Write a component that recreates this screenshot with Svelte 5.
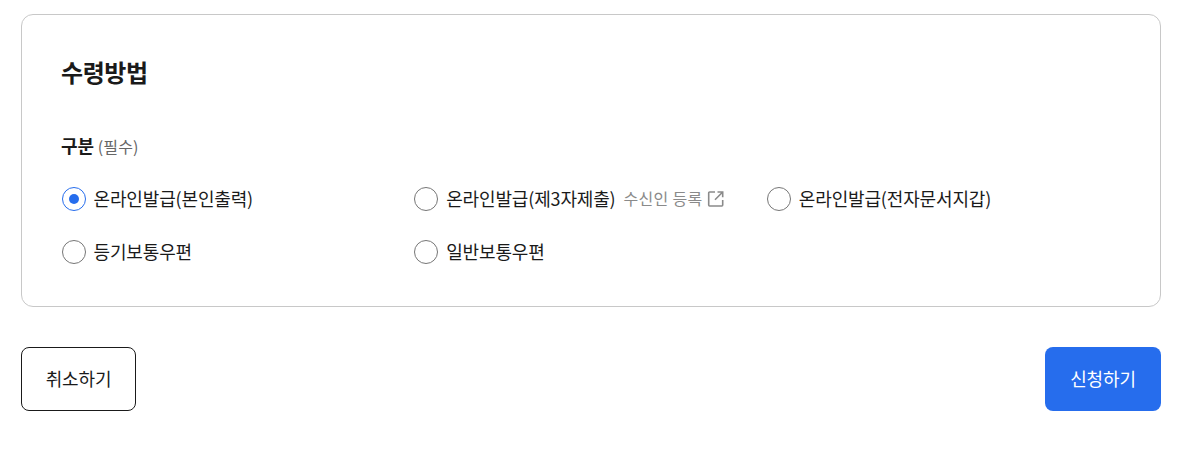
<script>
  const options = [
    { id: 'self', label: '온라인발급(본인출력)', checked: true },
    { id: 'third', label: '온라인발급(제3자제출)', link: '수신인 등록' },
    { id: 'wallet', label: '온라인발급(전자문서지갑)' },
    { id: 'registered', label: '등기보통우편' },
    { id: 'normal', label: '일반보통우편' },
  ]
  let selected = 'self'
</script>

<div class="page">
  <section class="card">
    <h2>수령방법</h2>
    <div class="field-label"><strong>구분</strong> <span>(필수)</span></div>
    <div class="options">
      {#each options as opt}
        <div class="option">
          <label>
            <input type="radio" name="method" value={opt.id} bind:group={selected} />
            <span class="mark"></span>
            <span class="text">{opt.label}</span>
          </label>
          {#if opt.link}
            <span class="link">{opt.link}
              <svg width="18" height="18" viewBox="0 0 18 18" fill="none" stroke="#8a8a8a" stroke-width="1.6">
                <path d="M8 2H2.6a.9.9 0 0 0-.9.9v12.2a.9.9 0 0 0 .9.9h12.2a.9.9 0 0 0 .9-.9V10" />
                <path d="M10.5 2h5.2v5.2M15.7 2 8 9.7" />
              </svg>
            </span>
          {/if}
        </div>
      {/each}
    </div>
  </section>
  <div class="actions">
    <button class="btn cancel">취소하기</button>
    <button class="btn submit">신청하기</button>
  </div>
</div>

<style>
  :global(body) {
    margin: 0;
    background: #fff;
  }

  .page {
    box-sizing: border-box;
    width: 1204px;
    height: 459px;
    padding: 14px 43px 0 21px;
    font-family: "Noto Sans CJK KR", "Noto Sans", sans-serif;
    color: #1a1a1a;
  }

  .card {
    box-sizing: border-box;
    height: 293px;
    padding: 39px 39px 0;
    border: 1px solid #c8c8c8;
    border-radius: 12px;
  }

  h2 {
    margin: 0;
    font-size: 24px;
    line-height: 36px;
    font-weight: 700;
    letter-spacing: -0.4px;
  }

  .field-label {
    margin-top: 40px;
    height: 30px;
    line-height: 30px;
    font-size: 18px;
    letter-spacing: -0.1px;
  }

  .field-label strong {
    font-weight: 700;
  }

  .field-label span {
    font-size: 16px;
    color: #666;
    letter-spacing: 0.1px;
  }

  .options {
    display: grid;
    grid-template-columns: repeat(3, 352.67px);
    row-gap: 17px;
    margin: 21px 0 0 0.5px;
  }

  .option {
    display: flex;
    align-items: center;
    height: 36px;
  }

  label {
    display: flex;
    align-items: center;
    gap: 8px;
    cursor: pointer;
    font-size: 18px;
    letter-spacing: -0.15px;
  }

  .text {
    margin-top: -2px;
  }

  input {
    position: absolute;
    opacity: 0;
    width: 0;
    height: 0;
  }

  .mark {
    box-sizing: border-box;
    width: 24px;
    height: 24px;
    border: 1.2px solid #767676;
    border-radius: 50%;
    background: #fff;
    display: flex;
    align-items: center;
    justify-content: center;
  }

  input:checked + .mark {
    border: 1.5px solid #266ded;
  }

  input:checked + .mark::after {
    content: '';
    width: 10px;
    height: 10px;
    border-radius: 50%;
    background: #266ded;
  }

  .link {
    display: flex;
    align-items: center;
    gap: 4px;
    margin: -2px 0 0 8px;
    font-size: 16px;
    letter-spacing: 0.3px;
    color: #8a8a8a;
  }

  .link svg {
    margin-top: 2px;
  }

  .actions {
    display: flex;
    justify-content: space-between;
    margin-top: 40px;
  }

  .btn {
    box-sizing: border-box;
    height: 64px;
    padding: 0 0 2px;
    border-radius: 8px;
    font-family: inherit;
    font-size: 18px;
    letter-spacing: -0.15px;
    cursor: pointer;
  }

  .cancel {
    width: 115px;
    background: #fff;
    border: 1px solid #1a1a1a;
    color: #1a1a1a;
  }

  .submit {
    width: 116px;
    background: #266ded;
    border: none;
    color: #fff;
  }
</style>
